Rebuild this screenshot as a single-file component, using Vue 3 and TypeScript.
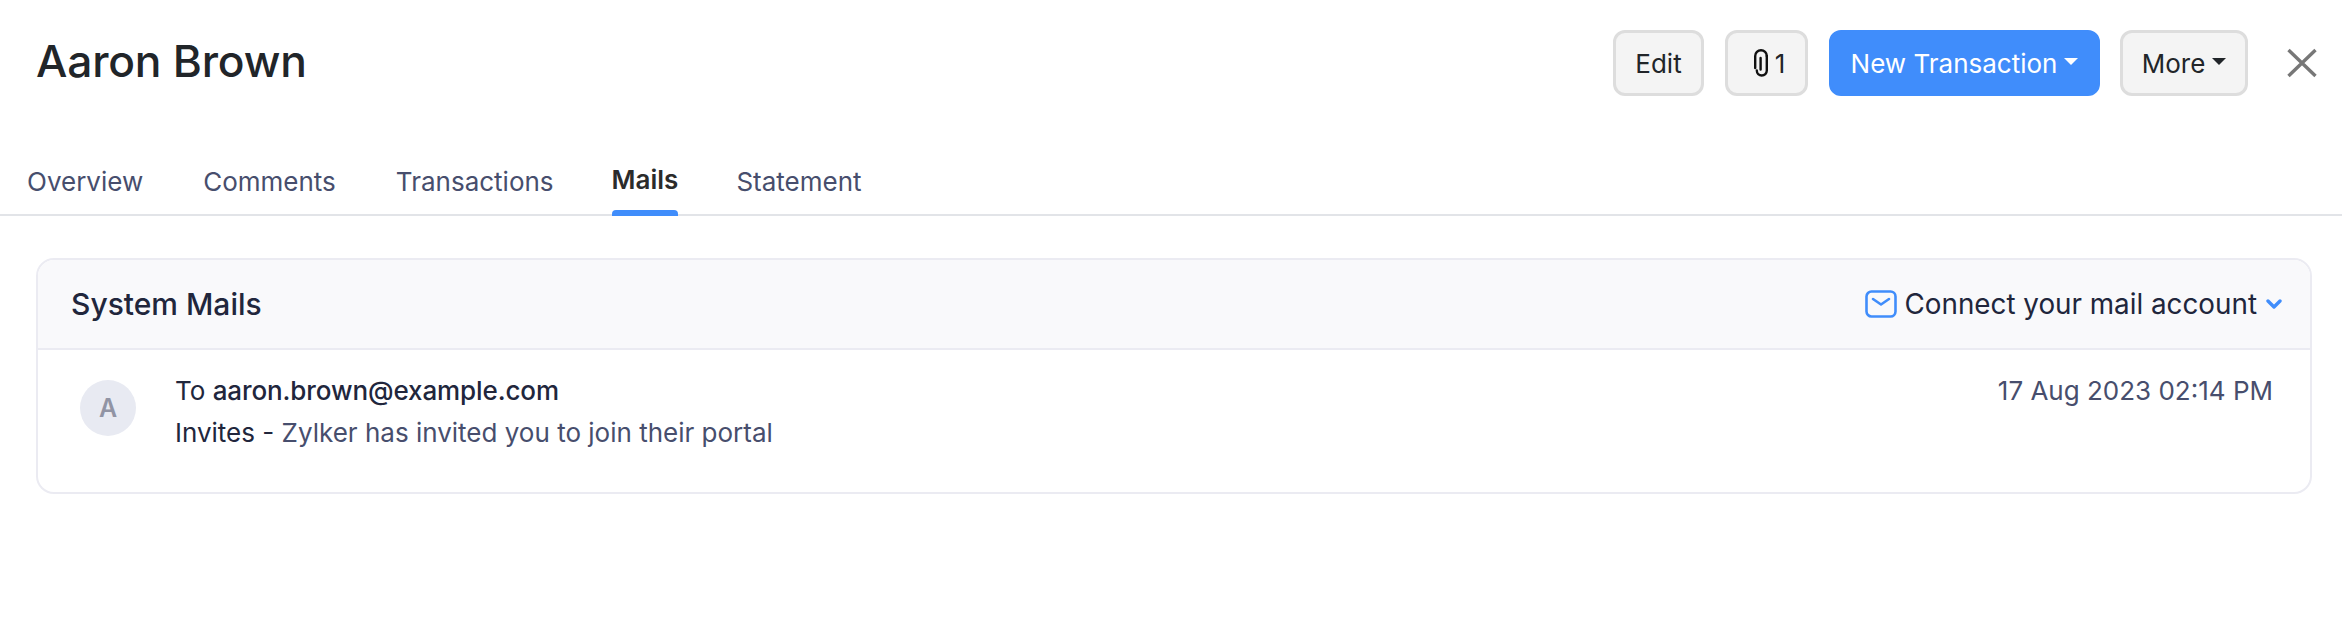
<template>
  <div class="page">
    <header class="top">
      <h1 class="title">Aaron Brown</h1>
      <div class="actions">
        <button class="btn btn--edit">Edit</button>
        <button class="btn btn--attach">
          <svg class="clip" viewBox="0 0 14 28" fill="none" stroke="#111" stroke-width="2.4" stroke-linecap="round" stroke-linejoin="round" aria-hidden="true">
            <path d="M6.6 9v11.5M12.8 7a5.8 5.8 0 0 0-11.6 0v12" />
            <path d="M12.8 7v14.5a5 5 0 0 1-10 0" />
          </svg>
          <span>1</span>
        </button>
        <button class="btn btn--primary">New Transaction<i class="caret"></i></button>
        <button class="btn btn--more">More<i class="caret"></i></button>
        <svg class="close" viewBox="0 0 30 30" fill="none" stroke="#777" stroke-width="3.4" aria-hidden="true">
          <path d="M1.5 2l27 26M28.5 2l-27 26" />
        </svg>
      </div>
    </header>

    <nav class="tabs">
      <a v-for="tab in tabs" :key="tab" class="tab" :class="{ 'tab--active': tab === activeTab }">{{ tab }}</a>
    </nav>

    <section class="card">
      <div class="card-head">
        <h2 class="card-title">System Mails</h2>
        <div class="connect">
          <svg class="mail" viewBox="0 0 32 28" fill="none" stroke="#408dfb" stroke-width="2.6" stroke-linecap="round" stroke-linejoin="round" aria-hidden="true">
            <rect x="1.5" y="1.5" width="29" height="25" rx="5" />
            <path d="M8 9l8 5.5L24 9" />
          </svg>
          <span>Connect your mail account</span>
          <svg class="chev" viewBox="0 0 16 10" fill="none" stroke="#408dfb" stroke-width="3.4" stroke-linecap="round" stroke-linejoin="round" aria-hidden="true">
            <path d="M2 2l6 6 6-6" />
          </svg>
        </div>
      </div>
      <div class="mail-row">
        <div class="avatar">A</div>
        <div class="mail-body">
          <div class="line">To <span class="addr">aaron.brown@example.com</span></div>
          <div class="line line--sub"><span class="tag">Invites -</span> Zylker has invited you to join their portal</div>
        </div>
        <div class="date">17 Aug 2023 02:14 PM</div>
      </div>
    </section>
  </div>
</template>

<script setup lang="ts">
const tabs: string[] = ["Overview", "Comments", "Transactions", "Mails", "Statement"];
const activeTab = "Mails";
</script>

<style scoped>
.page {
  width: 2342px;
  height: 624px;
  background: #fff;
  font-family: Inter, "Noto Sans", sans-serif;
  color: #21263c;
  overflow: hidden;
}

.top {
  display: flex;
  align-items: flex-start;
  justify-content: space-between;
  height: 66px;
  padding: 30px 25px 0 36px;
}

.title {
  margin: 0;
  font-size: 44.3px;
  font-weight: 500;
  line-height: 63px;
  color: #212529;
  letter-spacing: -0.2px;
}

.actions {
  display: flex;
  align-items: center;
}

.btn {
  display: flex;
  align-items: center;
  justify-content: center;
  height: 66px;
  padding: 0;
  margin-right: 21px;
  border: 3px solid #ddd;
  border-radius: 12px;
  background: #f4f4f4;
  color: #212529;
  font-family: inherit;
  font-size: 26px;
}

.btn--edit {
  width: 91px;
}

.btn--attach {
  gap: 7px;
  width: 83px;
  padding-left: 6px;
}

.btn--primary {
  width: 271px;
  margin-right: 20px;
  border-color: #408dfb;
  background: #408dfb;
  color: #fff;
}

.btn--more {
  width: 128px;
}

.clip {
  width: 14px;
  height: 28px;
}

.caret {
  width: 0;
  height: 0;
  margin-left: 7px;
  margin-bottom: 4px;
  border-left: 7px solid transparent;
  border-right: 7px solid transparent;
  border-top: 7px solid currentColor;
}

.close {
  width: 30px;
  height: 30px;
  margin-left: 18px;
}

.tabs {
  display: flex;
  gap: 60px;
  height: 120px;
  box-sizing: border-box;
  padding-left: 27px;
  border-bottom: 2px solid #e2e4e8;
}

.tab {
  display: flex;
  align-items: flex-end;
  position: relative;
  height: 118px;
  padding-bottom: 17px;
  box-sizing: border-box;
  font-size: 26px;
  color: #474e6d;
}

.tab--active {
  margin: 0 -2px;
  padding-bottom: 19px;
  font-weight: 600;
  color: #2b2b2b;
}

.tab--active::after {
  content: "";
  position: absolute;
  left: 0;
  right: 0;
  bottom: -2px;
  height: 6px;
  border-radius: 4px 4px 0 0;
  background: #408dfb;
}

.card {
  margin: 42px 30px 0 36px;
  height: 236px;
  box-sizing: border-box;
  border: 2px solid #ebebf2;
  border-radius: 18px;
  overflow: hidden;
}

.card-head {
  display: flex;
  align-items: center;
  justify-content: space-between;
  height: 88px;
  padding: 0 28px 0 33px;
  background: #f9f9fb;
  border-bottom: 2px solid #ebebf2;
}

.card-title {
  margin: 0;
  font-size: 30px;
  font-weight: 500;
  color: #21263c;
}

.connect {
  display: flex;
  align-items: center;
  font-size: 27.8px;
  color: #21263c;
}

.mail {
  width: 32px;
  height: 28px;
  margin-right: 7px;
}

.chev {
  width: 16px;
  height: 10px;
  margin-left: 9px;
}

.mail-row {
  display: flex;
  padding: 20px 37px 0 42px;
}

.avatar {
  display: flex;
  align-items: center;
  justify-content: center;
  width: 56px;
  height: 56px;
  margin-top: 10px;
  border-radius: 50%;
  background: #e8eaf2;
  color: #9194a4;
  font-size: 25px;
  font-weight: 600;
}

.mail-body {
  flex: 1;
  margin-left: 39px;
}

.line {
  font-size: 26px;
  line-height: 42px;
  color: #21263c;
}

.addr {
  font-weight: 500;
  letter-spacing: -0.1px;
}

.line--sub {
  color: #474e6d;
}

.tag {
  color: #21263c;
}

.date {
  font-size: 26px;
  line-height: 42px;
  color: #474e6d;
}
</style>

<style>
body {
  margin: 0;
}
</style>
